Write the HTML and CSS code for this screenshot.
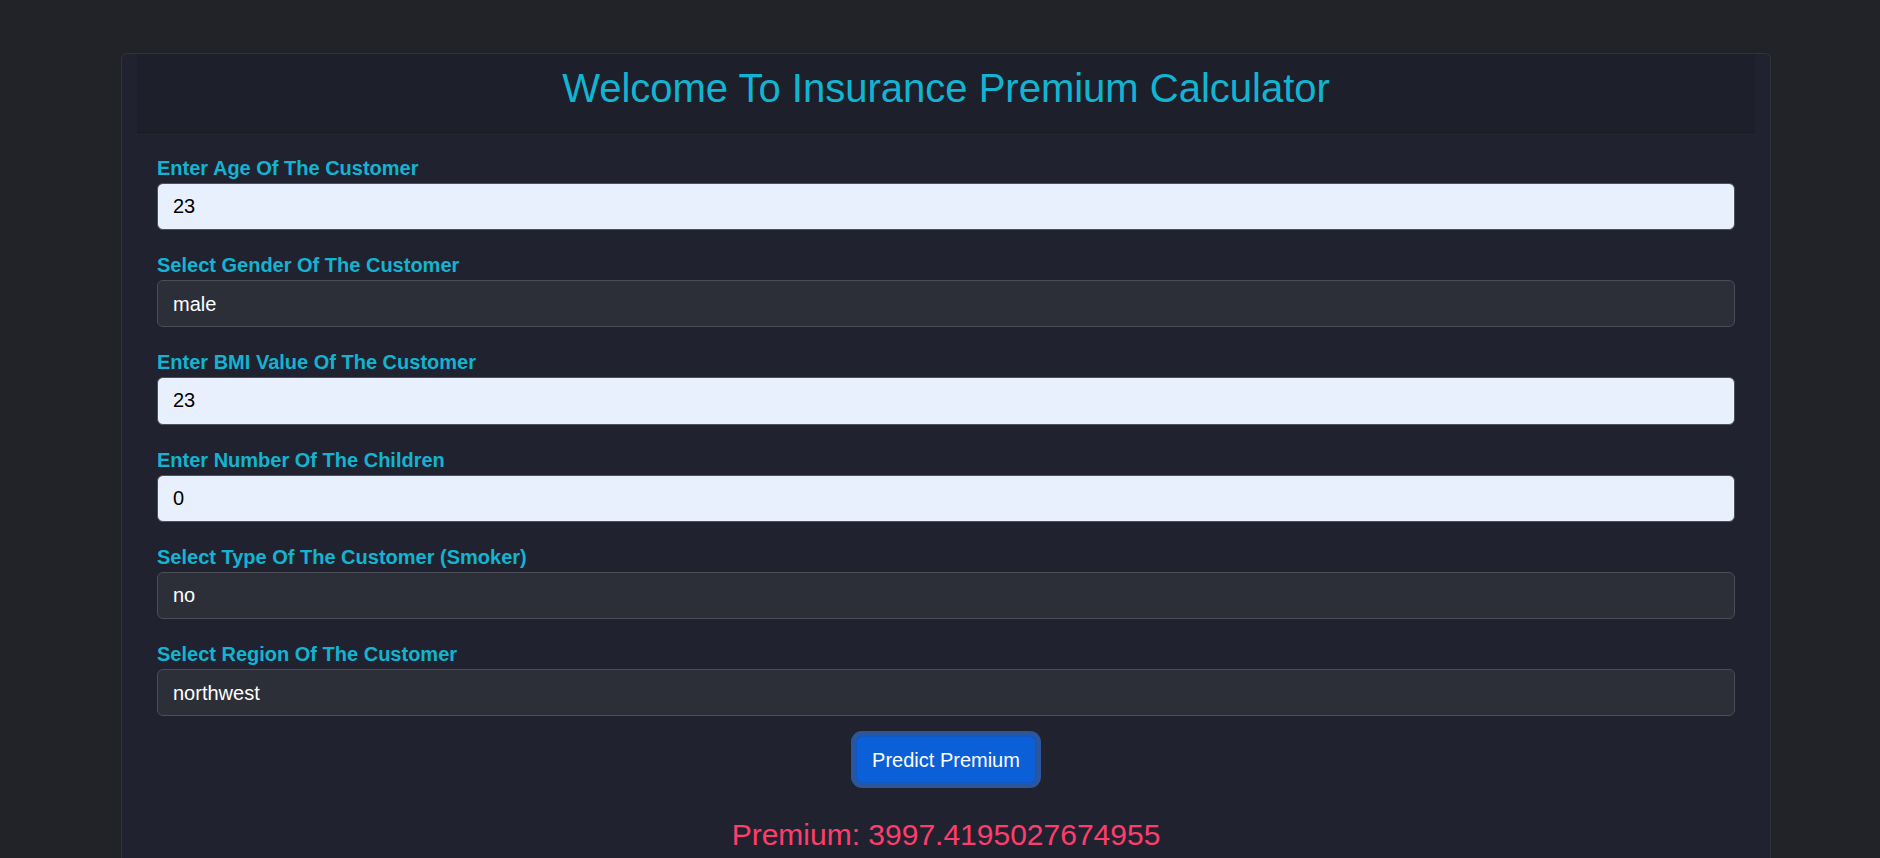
FILE: index.html
```html
<!DOCTYPE html>
<html lang="en">
<head>
<meta charset="utf-8">
<title>Insurance Premium Calculator</title>
<link rel="stylesheet" href="styles.css">
</head>
<body>
<div class="page">
  <div class="card">
    <div class="card-header">
      <h1 class="title">Welcome To Insurance Premium Calculator</h1>
    </div>
    <form class="form">
      <div class="group">
        <label class="label">Enter Age Of The Customer</label>
        <input class="field field-input" type="text" value="23">
      </div>
      <div class="group">
        <label class="label">Select Gender Of The Customer</label>
        <select class="field field-select"><option>male</option><option>female</option></select>
      </div>
      <div class="group">
        <label class="label">Enter BMI Value Of The Customer</label>
        <input class="field field-input" type="text" value="23">
      </div>
      <div class="group">
        <label class="label">Enter Number Of The Children</label>
        <input class="field field-input" type="text" value="0">
      </div>
      <div class="group">
        <label class="label">Select Type Of The Customer (Smoker)</label>
        <select class="field field-select"><option>no</option><option>yes</option></select>
      </div>
      <div class="group">
        <label class="label">Select Region Of The Customer</label>
        <select class="field field-select"><option>northwest</option><option>northeast</option><option>southwest</option><option>southeast</option></select>
      </div>
      <div class="actions">
        <button type="button" class="btn">Predict Premium</button>
      </div>
      <h4 class="result">Premium: 3997.4195027674955</h4>
    </form>
  </div>
</div>
</body>
</html>
```

FILE: styles.css
```css
* { box-sizing: border-box; }
html, body {
  margin: 0;
  padding: 0;
  background: #212328;
  font-family: "Liberation Sans", Arial, sans-serif;
  overflow: hidden;
}
.page {
  padding: 53px 0 0 121px;
  height: 858px;
}
.card {
  width: 1650px;
  background: #20232f;
  border: 1px solid #30333b;
  border-bottom: 0;
  border-radius: 6px 6px 0 0;
  padding: 0 15px;
  height: 805px;
}
.card-header {
  background: #1d202b;
  border-bottom: 1px solid #191b24;
  padding: 10px 10px 10px;
}
.title {
  margin: 0 0 10px;
  font-size: 40px;
  line-height: 48px;
  font-weight: 400;
  text-align: center;
  color: #11b5d3;
}
.form {
  padding: 20px 20px 0;
}
.group {
  margin-bottom: 20px;
}
.label {
  display: block;
  font-size: 20px;
  line-height: 30px;
  font-weight: 700;
  color: #13b3d1;
}
.field {
  display: block;
  width: 100%;
  height: 47.2px;
  padding: 7.5px 15px;
  font-family: "Liberation Sans", Arial, sans-serif;
  font-size: 20px;
  line-height: 30px;
  border-radius: 6px;
  outline: none;
}
.field-input {
  background: #e8f0fe;
  color: #000;
  border: 1px solid #4e5159;
}
.field-select {
  -webkit-appearance: none;
  appearance: none;
  background: #2c2f38;
  color: #fff;
  border: 1px solid #4b4e56;
}
.actions {
  text-align: center;
}
.btn {
  font-family: "Liberation Sans", Arial, sans-serif;
  font-size: 20px;
  line-height: 30px;
  padding: 7.5px 15px;
  color: #fff;
  background: #0b5fd7;
  border: 1px solid #0a58ca;
  border-radius: 6px;
  box-shadow: 0 0 0 5px #2b569c;
  height: 47px;
}
.result {
  margin: 34px 0 0;
  font-size: 30px;
  line-height: 36px;
  font-weight: 400;
  text-align: center;
  color: #ff3d6d;
}
```
